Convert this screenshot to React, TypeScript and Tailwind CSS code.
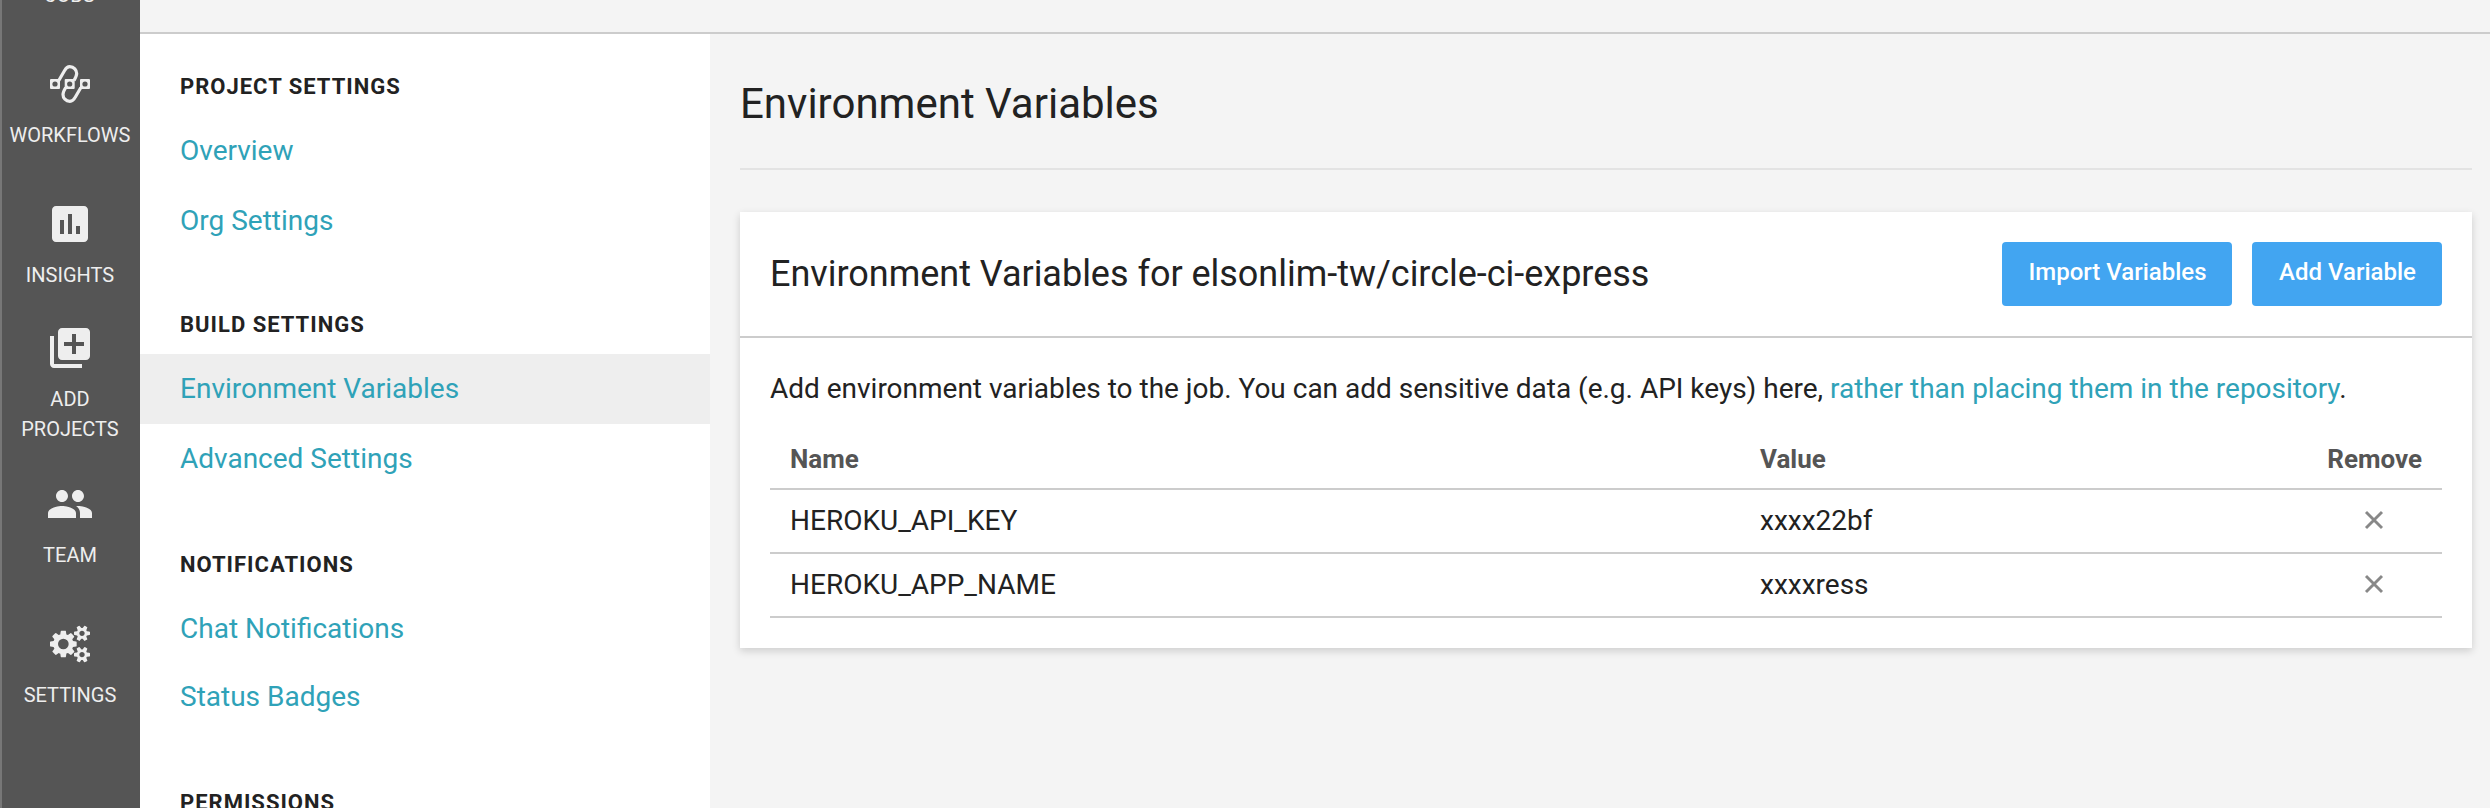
import type { ReactNode } from "react";

const COGS =
  "M896 896q0-106-75-181t-181-75-181 75-75 181 75 181 181 75 181-75 75-181zm768 512q0-52-38-90t-90-38-90 38-38 90q0 53 37.5 90.5t90.5 37.5 90.5-37.5 37.5-90.5zm0-1024q0-52-38-90t-90-38-90 38-38 90q0 53 37.5 90.5t90.5 37.5 90.5-37.5 37.5-90.5zm-384 421v185q0 10-7 19.5t-16 10.5l-155 24q-11 35-32 76 34 48 90 115 7 11 7 20 0 12-7 19-23 30-82.5 89.5t-78.5 59.5q-11 0-21-7l-115-90q-37 19-77 31-11 108-23 155-7 24-30 24h-186q-11 0-20-7.5t-10-17.5l-23-153q-34-10-75-31l-118 89q-7 7-20 7-11 0-21-8-144-133-144-160 0-9 7-19 10-14 41-53t47-61q-23-44-35-82l-152-24q-10-1-17-9.5t-7-19.5v-185q0-10 7-19.5t16-10.5l155-24q11-35 32-76-34-48-90-115-7-11-7-20 0-12 7-20 22-30 82-89t79-59q11 0 21 7l115 90q34-18 77-32 11-108 23-154 7-24 30-24h186q11 0 20 7.5t10 17.5l23 153q34 10 75 31l118-89q8-7 20-7 11 0 21 8 144 133 144 160 0 8-7 19-12 16-42 54t-45 60q23 48 34 82l152 23q10 2 17 10.5t7 19.5zm640 533v140q0 16-149 31-12 27-30 52 51 113 51 138 0 4-4 7-122 71-124 71-8 0-46-47t-52-68q-20 2-30 2t-30-2q-14 21-52 68t-46 47q-2 0-124-71-4-3-4-7 0-25 51-138-18-25-30-52-149-15-149-31v-140q0-16 149-31 13-29 30-52-51-113-51-138 0-4 4-7 4-2 35-20t59-34 30-16q8 0 46 46.5t52 67.5q20-2 30-2t30 2q51-71 92-112l6-2q4 0 124 70 4 3 4 7 0 25-51 138 17 23 30 52 149 15 149 31zm0-1024v140q0 16-149 31-12 27-30 52 51 113 51 138 0 4-4 7-122 71-124 71-8 0-46-47t-52-68q-20 2-30 2t-30-2q-14 21-52 68t-46 47q-2 0-124-71-4-3-4-7 0-25 51-138-18-25-30-52-149-15-149-31v-140q0-16 149-31 13-29 30-52-51-113-51-138 0-4 4-7 4-2 35-20t59-34 30-16q8 0 46 46.5t52 67.5q20-2 30-2t30 2q51-71 92-112l6-2q4 0 124 70 4 3 4 7 0 25-51 138 17 23 30 52 149 15 149 31z";

const LOOP = "M12.8 20.500 L18.600 10.600 C19.800 8.200 21.400 6.700 23.800 6.700 C28 6.700 30.700 10 30.700 13.600 C30.700 16 29.500 18 28 20.500";

function WorkflowsIcon() {
  return (
    <svg className="size-12" viewBox="0 0 48 48">
      <g fill="none" stroke="currentColor" strokeWidth="3.2">
        <path d={LOOP} />
        <path d={LOOP} transform="rotate(180 23.85 24)" />
      </g>
      <g fill="currentColor">
        <rect x="4" y="19" width="10" height="10" rx="1" />
        <rect x="18.7" y="19" width="10" height="10" rx="1" />
        <rect x="34" y="19" width="10" height="10" rx="1" />
      </g>
      <g fill="#555">
        <circle cx="9" cy="24" r="2.6" />
        <circle cx="23.7" cy="24" r="2.6" />
        <circle cx="39" cy="24" r="2.6" />
      </g>
    </svg>
  );
}

function InsightsIcon() {
  return (
    <svg className="size-12" viewBox="0 0 24 24" fill="currentColor">
      <path d="M19 3H5c-1.100 0-2 .9-2 2v14c0 1.100.9 2 2 2h14c1.100 0 2-.9 2-2V5c0-1.100-.9-2-2-2zM9 17H7v-7h2v7zm4 0h-2V7h2v10zm4 0h-2v-4h2v4z" />
    </svg>
  );
}

function AddIcon() {
  return (
    <svg className="size-12" viewBox="0 0 24 24" fill="currentColor">
      <path d="M4 6H2v14c0 1.100.9 2 2 2h14v-2H4V6zm16-4H8c-1.100 0-2 .9-2 2v12c0 1.100.9 2 2 2h12c1.100 0 2-.9 2-2V4c0-1.100-.9-2-2-2zm-1 9h-4v4h-2v-4H9V9h4V5h2v4h4v2z" />
    </svg>
  );
}

function TeamIcon() {
  return (
    <svg className="size-12" viewBox="0 0 24 24" fill="currentColor">
      <path d="M16 11c1.660 0 2.990-1.340 2.990-3S17.660 5 16 5c-1.660 0-3 1.340-3 3s1.340 3 3 3zm-8 0c1.660 0 2.990-1.340 2.990-3S9.660 5 8 5C6.340 5 5 6.340 5 8s1.340 3 3 3zm0 2c-2.330 0-7 1.170-7 3.500V19h14v-2.500c0-2.330-4.670-3.500-7-3.500zm8 0c-.29 0-.62.020-.97.050 1.160.84 1.970 1.970 1.970 3.450V19h6v-2.500c0-2.330-4.670-3.500-7-3.500z" />
    </svg>
  );
}

function SettingsIcon() {
  return (
    <svg className="my-[5px] h-[38px] w-10" viewBox="0 0 1920 1792" fill="currentColor">
      <path d={COGS} />
    </svg>
  );
}

function RailItem({ icon, label, className }: { icon: ReactNode; label: string; className: string }) {
  return (
    <a className={`flex w-full flex-col items-center gap-3 ${className}`}>
      {icon}
      <span className="w-full px-1 text-center text-[20px] leading-[30px]">{label}</span>
    </a>
  );
}

function Rail() {
  return (
    <nav className="flex h-full w-[140px] shrink-0 flex-col items-center overflow-hidden border-l-2 border-[#777] bg-[#555] pr-0.5 text-[#eee]">
      <span className="-mt-5 text-[20px] leading-[30px]">JOBS</span>
      <RailItem icon={<WorkflowsIcon />} label="WORKFLOWS" className="mt-[50px]" />
      <RailItem icon={<InsightsIcon />} label="INSIGHTS" className="mt-[50px]" />
      <RailItem icon={<AddIcon />} label="ADD PROJECTS" className="mt-[34px]" />
      <RailItem icon={<TeamIcon />} label="TEAM" className="mt-9" />
      <RailItem icon={<SettingsIcon />} label="SETTINGS" className="mt-[50px]" />
    </nav>
  );
}

function MenuHeading({ children }: { children: string }) {
  return <h2 className="px-10 pb-[13px] text-[22px] leading-[33px] font-bold tracking-[1px] text-[#222]">{children}</h2>;
}

function MenuLink({ children, className = "h-[70px]" }: { children: string; className?: string }) {
  return <a className={`block shrink-0 px-10 text-[28px] leading-[70px] text-[#2fa2b8] ${className}`}>{children}</a>;
}

function SettingsMenu() {
  return (
    <aside className="flex w-[570px] shrink-0 flex-col gap-[54px] overflow-hidden bg-white pt-9">
      <section className="-mb-0.5">
        <MenuHeading>PROJECT SETTINGS</MenuHeading>
        <MenuLink>Overview</MenuLink>
        <MenuLink>Org Settings</MenuLink>
      </section>
      <section>
        <MenuHeading>BUILD SETTINGS</MenuHeading>
        <MenuLink className="h-[70px] bg-[#eee]">Environment Variables</MenuLink>
        <MenuLink>Advanced Settings</MenuLink>
      </section>
      <section>
        <MenuHeading>NOTIFICATIONS</MenuHeading>
        <MenuLink className="h-[68px]">Chat Notifications</MenuLink>
        <MenuLink>Status Badges</MenuLink>
      </section>
      <section>
        <MenuHeading>PERMISSIONS</MenuHeading>
      </section>
    </aside>
  );
}

function Button({ children, className }: { children: string; className: string }) {
  return (
    <button className={`h-16 rounded bg-[#42a5f1] pt-4 pb-5 pl-px text-center text-[24px] leading-7 font-medium text-white ${className}`}>
      {children}
    </button>
  );
}

const VARIABLES = [
  { name: "HEROKU_API_KEY", value: "xxxx22bf" },
  { name: "HEROKU_APP_NAME", value: "xxxxress" },
];

function VariableTable() {
  return (
    <table className="mt-[39px] w-full table-fixed border-collapse text-left">
      <thead>
        <tr className="text-[26px] leading-[30px] text-[#555]">
          <th className="w-[970px] border-b-2 border-[#ccc] pb-3.5 pl-5 font-bold">Name</th>
          <th className="border-b-2 border-[#ccc] pb-3.5 pl-5 font-bold">Value</th>
          <th className="w-[136px] border-b-2 border-[#ccc] pr-5 pb-3.5 text-right font-bold">Remove</th>
        </tr>
      </thead>
      <tbody>
        {VARIABLES.map((v) => (
          <tr key={v.name} className="h-16 border-b-2 border-[#ccc] text-[28px] leading-[62px] text-[#222]">
            <td className="pl-5">{v.name}</td>
            <td className="pl-5">{v.value}</td>
            <td className="pb-0.5">
              <svg className="mx-auto size-5" viewBox="0 0 20 20" fill="none" stroke="#888" strokeWidth="2.9">
                <path d="M2 2l16 16M18 2l-16 16" />
              </svg>
            </td>
          </tr>
        ))}
      </tbody>
    </table>
  );
}

export default function App() {
  return (
    <div className="flex h-[808px] w-[2490px] overflow-hidden bg-[#f4f4f4] font-['Roboto',sans-serif] text-[#222]">
      <Rail />
      <div className="flex min-w-0 flex-1 flex-col">
        <header className="h-[34px] shrink-0 border-b-2 border-[#ccc]" />
        <div className="flex min-h-0 flex-1">
          <SettingsMenu />
          <main className="min-w-0 flex-1 pr-[18px] pl-[30px]">
            <h1 className="border-b-2 border-[#e3e3e3] pt-[45px] pb-10 text-[42px] leading-[49px]">Environment Variables</h1>
            <section className="mt-[42px] h-[436px] bg-white shadow-[0_3px_8px_rgba(0,0,0,0.16)]">
              <div className="flex h-[126px] items-center border-b-2 border-[#ccc] px-[30px]">
                <h2 className="flex-1 text-[36px] leading-[42px] tracking-[-0.02px]">
                  Environment Variables for elsonlim-tw/circle-ci-express
                </h2>
                <div className="flex gap-5">
                  <Button className="w-[230px]">Import Variables</Button>
                  <Button className="w-[190px]">Add Variable</Button>
                </div>
              </div>
              <div className="px-[30px] pt-[34px]">
                <p className="text-[28px] leading-[33px] tracking-[-0.01px]">
                  Add environment variables to the job. You can add sensitive data (e.g. API keys) here,{" "}
                  <a className="text-[#2fa2b8]">rather than placing them in the repository</a>.
                </p>
                <VariableTable />
              </div>
            </section>
          </main>
        </div>
      </div>
    </div>
  );
}
